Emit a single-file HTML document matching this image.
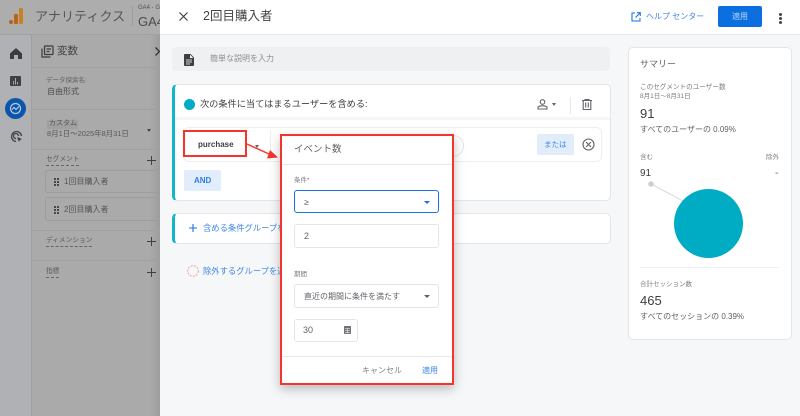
<!DOCTYPE html>
<html lang="ja"><head><meta charset="utf-8">
<style>
html,body{margin:0;padding:0}
body{width:800px;height:416px;overflow:hidden;position:relative;background:#f6f7f9;font-family:"Liberation Sans","Noto Sans CJK JP",sans-serif;color:#3c4043}
.a,.t{position:absolute}
.t{white-space:nowrap;line-height:1}
svg{position:absolute;display:block}
.box{position:absolute;box-sizing:border-box;background:#fff;border:1px solid #e3e5e8;border-radius:4px}
</style></head><body>

<!-- dimmed left -->
<div class="a" style="left:0;top:0;width:160px;height:416px;background:#aaaaaa"></div>
<div class="a" style="left:0;top:0;width:160px;height:34px;background:#adadad"></div>
<div class="a" style="left:0;top:34px;width:32px;height:382px;background:#afb1b4;border-right:1px solid #a0a0a0;box-sizing:border-box"></div>
<div class="a" style="left:0;top:34px;width:160px;height:1px;background:#a2a2a2"></div>
<div class="a" style="left:150px;top:35px;width:10px;height:381px;background:linear-gradient(90deg,#aaa,#9d9d9d)"></div>
<div class="a" style="left:9px;top:20px;width:4px;height:4px;background:#b5611a;border-radius:50%"></div>
<div class="a" style="left:14px;top:14px;width:4px;height:10px;background:#b8641a;border-radius:1px"></div>
<div class="a" style="left:19px;top:8px;width:4px;height:16px;background:#c98020;border-radius:1px"></div>
<div class="t" style="left:35px;top:10px;font-size:13px;color:#565656;letter-spacing:.1px">アナリティクス</div>
<div class="a" style="left:132px;top:6px;width:1px;height:20px;background:#9c9c9c"></div>
<div class="t" style="left:138px;top:5px;font-size:6px;color:#555">GA4 - G</div>
<div class="t" style="left:138px;top:15px;font-size:13px;color:#4c4c4c">GA4</div>

<!-- rail icons -->
<svg style="left:10px;top:48px" width="12" height="11" viewBox="0 0 12 11"><path d="M0 5.500L6 0l6 5.500V11H8V7H4v4H0z" fill="#3a3c3e"/></svg>
<svg style="left:10px;top:76px" width="11" height="10" viewBox="0 0 11 10"><rect width="11" height="10" rx="1" fill="#3e4042"/><path d="M3 5h1v3.500H3zM5 2h1v6.500H5zM7 6h1v2.500H7z" fill="#aaa"/></svg>
<div class="a" style="left:5px;top:98px;width:21px;height:21px;border-radius:50%;background:#0b55ad"></div>
<svg style="left:9px;top:102px" width="13" height="13" viewBox="0 0 13 13" fill="none" stroke="#b9c9dc" stroke-width="1.200"><circle cx="6.500" cy="6.500" r="5"/><path d="M3 7.500l2-2 2 2 3-3"/></svg>
<svg style="left:10px;top:130px" width="13" height="13" viewBox="0 0 13 13" fill="none" stroke="#3c3e40" stroke-width="1.300"><path d="M6 11.500A5 5 0 1 1 11.500 6"/><path d="M6 8.500A2.500 2.500 0 1 1 8.500 6"/><path d="M7 7l5 2-2 1-1 2z" fill="#3c3e40" stroke="none"/></svg>

<!-- left panel -->
<svg style="left:41px;top:45px" width="13" height="13" viewBox="0 0 13 13" fill="none" stroke="#3a3c3e" stroke-width="1.200"><rect x="3.500" y="1" width="8.500" height="8.500" rx=".5"/><path d="M1 3.500V12h8.500"/><path d="M5.500 4h4.500M5.500 6.500h3"/></svg>
<div class="t" style="left:57px;top:46px;font-size:10.500px;color:#444">変数</div>
<svg style="left:155px;top:47px" width="5" height="9" viewBox="0 0 5 9" fill="none" stroke="#333" stroke-width="1.300"><path d="M.5.500l4 4-4 4"/></svg>
<div class="a" style="left:32px;top:67px;width:128px;height:1px;background:#a0a0a0"></div>
<div class="t" style="left:46px;top:78px;font-size:6.500px;color:#636363">データ探索名:</div>
<div class="t" style="left:47px;top:88px;font-size:8px;color:#4a4a4a">自由形式</div>
<div class="a" style="left:32px;top:109px;width:128px;height:1px;background:#a0a0a0"></div>
<div class="a" style="left:47px;top:120px;width:31px;height:9px;background:#a0a0a0;border-radius:1px"></div>
<div class="t" style="left:49px;top:120px;font-size:7px;color:#555">カスタム</div>
<div class="t" style="left:47px;top:130px;font-size:7.500px;color:#595959;letter-spacing:-.05px">8月1日～2025年8月31日</div>
<div class="a" style="left:147px;top:129px;border:2.500px solid transparent;border-top:3px solid #444;border-bottom:0"></div>
<div class="a" style="left:32px;top:149px;width:128px;height:1px;background:#a0a0a0"></div>
<div class="t" style="left:46px;top:157px;font-size:6.700px;color:#5c5c5c;border-bottom:1px dashed #666;padding-bottom:1px">セグメント</div>
<svg style="left:147px;top:156px" width="9" height="9" viewBox="0 0 9 9" stroke="#3f3f3f"><path d="M4.500 0v9M0 4.500h9"/></svg>
<div class="a" style="left:45px;top:170px;width:115px;height:23px;border:1px solid #9d9d9d;border-right:0;border-radius:3px 0 0 3px;box-sizing:border-box"></div>
<svg style="left:54px;top:178px" width="5" height="8" viewBox="0 0 5 8" fill="#484848"><path d="M0 0h2v2H0zM3 0h2v2H3zM0 3h2v2H0zM3 3h2v2H3zM0 6h2v2H0zM3 6h2v2H3z"/></svg>
<div class="t" style="left:64px;top:178px;font-size:8px;color:#555">1回目購入者</div>
<div class="a" style="left:45px;top:197px;width:115px;height:24px;border:1px solid #9d9d9d;border-right:0;border-radius:3px 0 0 3px;box-sizing:border-box"></div>
<svg style="left:54px;top:206px" width="5" height="8" viewBox="0 0 5 8" fill="#484848"><path d="M0 0h2v2H0zM3 0h2v2H3zM0 3h2v2H0zM3 3h2v2H3zM0 6h2v2H0zM3 6h2v2H3z"/></svg>
<div class="t" style="left:64px;top:206px;font-size:8px;color:#555">2回目購入者</div>
<div class="a" style="left:32px;top:230px;width:128px;height:1px;background:#a0a0a0"></div>
<div class="t" style="left:46px;top:238px;font-size:6.700px;color:#5c5c5c;border-bottom:1px dashed #666;padding-bottom:1px">ディメンション</div>
<svg style="left:147px;top:237px" width="9" height="9" viewBox="0 0 9 9" stroke="#3f3f3f"><path d="M4.500 0v9M0 4.500h9"/></svg>
<div class="a" style="left:32px;top:260px;width:128px;height:1px;background:#a0a0a0"></div>
<div class="t" style="left:46px;top:269px;font-size:6.700px;color:#5c5c5c;border-bottom:1px dashed #666;padding-bottom:1px">指標</div>
<svg style="left:147px;top:268px" width="9" height="9" viewBox="0 0 9 9" stroke="#3f3f3f"><path d="M4.500 0v9M0 4.500h9"/></svg>

<!-- main -->
<div class="a" style="left:160px;top:0;width:640px;height:34px;background:#fff;border-bottom:1px solid #e6e8ea"></div>
<svg style="left:179px;top:12px" width="9" height="9" viewBox="0 0 9 9" stroke="#3c4043" stroke-width="1.200"><path d="M.5.500l8 8M8.500.500l-8 8"/></svg>
<div class="t" style="left:203px;top:10px;font-size:12.500px;color:#444">2回目購入者</div>
<svg style="left:631px;top:12px" width="10" height="10" viewBox="0 0 10 10" fill="none" stroke="#1a73e8" stroke-width="1.100"><path d="M4 1H1v8h8V6"/><path d="M6 .7h3.300V4M9 1L4.500 5.500"/></svg>
<div class="t" style="left:646px;top:13px;font-size:8px;color:#3f87e6">ヘルプ センター</div>
<div class="a" style="left:718px;top:6px;width:44px;height:21px;background:#0b6fe0;border-radius:2px"></div>
<div class="t" style="left:732px;top:13px;font-size:8px;color:#bcd6f7">適用</div>
<div class="a" style="left:779px;top:13px;width:3px;height:3px;background:#444;border-radius:50%;box-shadow:0 4px 0 #444,0 8px 0 #444"></div>

<div class="a" style="left:172px;top:47px;width:438px;height:24px;background:#eff0f2;border-radius:4px"></div>
<svg style="left:184px;top:54px" width="10" height="12" viewBox="0 0 10 12"><path d="M1 0h5.500L10 3.500V11a1 1 0 0 1-1 1H1a1 1 0 0 1-1-1V1a1 1 0 0 1 1-1z" fill="#3c4043"/><path d="M2 6h6M2 8h6M2 10h4" stroke="#fff" stroke-width=".8"/><path d="M6 .8V4h3.200" fill="#fff"/></svg>
<div class="t" style="left:210px;top:55px;font-size:8px;color:#8a8d90">簡単な説明を入力</div>

<!-- include card -->
<div class="box" style="left:172px;top:84px;width:439px;height:117px;border-left:3px solid #12b5cb;border-radius:5px"></div>
<div class="a" style="left:175px;top:117px;width:435px;height:3px;background:#f5f6f7"></div>
<div class="a" style="left:184px;top:99px;width:11px;height:11px;border-radius:50%;background:#00acc8"></div>
<div class="t" style="left:200px;top:100px;font-size:9.200px;color:#3e4144">次の条件に当てはまるユーザーを含める:</div>
<svg style="left:537px;top:99px" width="11" height="11" viewBox="0 0 11 11" fill="none" stroke="#5f6368" stroke-width="1.100"><circle cx="5.500" cy="3" r="2.300"/><path d="M1 10V8.500C1 7.500 3 6.800 5.500 6.800S10 7.500 10 8.500V10z"/></svg>
<div class="a" style="left:552px;top:103px;border:2.500px solid transparent;border-top:3px solid #5f6368;border-bottom:0"></div>
<div class="a" style="left:570px;top:97px;width:1px;height:17px;background:#e6e8ea"></div>
<svg style="left:582px;top:99px" width="10" height="11" viewBox="0 0 10 11" fill="none" stroke="#5f6368" stroke-width="1.100"><path d="M0 1.500h10M3 1.500V.5h4v1M1.200 1.500V10.500h7.600V1.500M3.700 3.500v5M6.300 3.500v5"/></svg>

<!-- filter row -->
<div class="box" style="left:183px;top:127px;width:419px;height:35px;border-radius:6px;border-color:#eceef0"></div>
<div class="a" style="left:270px;top:130px;width:1px;height:30px;background:#eceef0"></div>
<div class="a" style="left:255px;top:145px;border:2.500px solid transparent;border-top:3px solid #5f6368;border-bottom:0"></div>
<div class="a" style="left:440px;top:135px;width:24px;height:22px;border:1px solid #e3e5e8;border-left:0;border-radius:0 11px 11px 0;box-sizing:border-box"></div>
<div class="a" style="left:537px;top:134px;width:37px;height:21px;background:#e1edfb;border-radius:2px"></div>
<div class="t" style="left:544px;top:141px;font-size:7.500px;color:#3f87e6">または</div>
<svg style="left:582px;top:138px" width="13" height="13" viewBox="0 0 13 13" fill="none" stroke="#5f6368" stroke-width="1.100"><circle cx="6.500" cy="6.500" r="5.500"/><path d="M4 4l5 5M9 4l-5 5"/></svg>
<div class="a" style="left:184px;top:170px;width:37px;height:21px;background:#e1edfb;border-radius:2px"></div>
<div class="t" style="left:194px;top:177px;font-size:8px;color:#2f7de1;font-weight:700">AND</div>

<div class="a" style="left:183px;top:130px;width:64px;height:27px;box-sizing:border-box;border:2px solid #f5352b;background:#fff"></div>
<div class="t" style="left:198px;top:141px;font-size:8px;color:#3c4043;font-weight:700">purchase</div>
<svg style="left:245px;top:142px" width="36" height="20" viewBox="0 0 36 20"><path d="M2 2L24 12" stroke="#f5352b" stroke-width="1.500"/><path d="M33 15.500L22 16.500 25 8z" fill="#f5352b"/></svg>

<!-- add include card -->
<div class="box" style="left:172px;top:213px;width:439px;height:31px;border-left:3px solid #12b5cb;border-radius:5px"></div>
<svg style="left:189px;top:224px" width="8" height="8" viewBox="0 0 8 8" stroke="#1a73e8" stroke-width="1.100"><path d="M4 0v8M0 4h8"/></svg>
<div class="t" style="left:203px;top:224px;font-size:8.300px;color:#3f87e6">含める条件グループを追加</div>

<svg style="left:187px;top:265px" width="12" height="12" viewBox="0 0 12 12" fill="none" stroke="#eea49d" stroke-width="1" stroke-dasharray="2 1.200"><circle cx="6" cy="6" r="5.300"/></svg>
<div class="t" style="left:203px;top:267px;font-size:8.300px;color:#3f87e6">除外するグループを追加</div>

<!-- summary -->
<div class="box" style="left:628px;top:47px;width:164px;height:293px;border-radius:5px"></div>
<div class="t" style="left:640px;top:60px;font-size:9px;color:#5f6368">サマリー</div>
<div class="t" style="left:640px;top:85px;font-size:6.600px;color:#7b7e82">このセグメントのユーザー数</div>
<div class="t" style="left:640px;top:94px;font-size:6.500px;color:#7b7e82">8月1日～8月31日</div>
<div class="t" style="left:640px;top:107px;font-size:13px;color:#3c4043">91</div>
<div class="t" style="left:640px;top:126px;font-size:8px;color:#5f6368">すべてのユーザーの 0.09%</div>
<div class="t" style="left:640px;top:155px;font-size:6.500px;color:#7b7e82">含む</div>
<div class="t" style="left:766px;top:155px;font-size:6.500px;color:#7b7e82">除外</div>
<div class="t" style="left:640px;top:169px;font-size:10px;color:#3c4043">91</div>
<div class="t" style="left:775px;top:169px;font-size:10px;color:#5f6368">-</div>
<svg style="left:640px;top:176px" width="110" height="90" viewBox="0 0 110 90"><path d="M11 8L45 26" stroke="#dcdcdc"/><circle cx="11" cy="8" r="2.800" fill="#cfcfcf"/></svg>
<div class="a" style="left:674px;top:189px;width:69px;height:69px;border-radius:50%;background:#00acc4"></div>
<div class="a" style="left:640px;top:267px;width:139px;height:1px;background:#eff0f2"></div>
<div class="t" style="left:640px;top:282px;font-size:6.500px;color:#7b7e82">合計セッション数</div>
<div class="t" style="left:640px;top:294px;font-size:13px;color:#3c4043">465</div>
<div class="t" style="left:640px;top:313px;font-size:8px;color:#5f6368">すべてのセッションの 0.39%</div>

<!-- popup -->
<div class="a" style="left:280px;top:134px;width:174px;height:251px;box-sizing:border-box;background:#fff;border:2px solid #f5352b;box-shadow:0 4px 10px rgba(0,0,0,.25)"></div>
<div class="t" style="left:294px;top:145px;font-size:9.500px;color:#5f6368">イベント数</div>
<div class="a" style="left:282px;top:164px;width:170px;height:1px;background:#e6e8ea"></div>
<div class="t" style="left:294px;top:178px;font-size:6.500px;color:#7b7e82">条件*</div>
<div class="a" style="left:294px;top:190px;width:145px;height:23px;box-sizing:border-box;border:1.500px solid #1a73e8;border-radius:3px"></div>
<div class="t" style="left:304px;top:198px;font-size:8.500px;color:#5f6368">≥</div>
<div class="a" style="left:424px;top:201px;border:3px solid transparent;border-top:3.500px solid #1a73e8;border-bottom:0"></div>
<div class="box" style="left:294px;top:224px;width:145px;height:24px;border-radius:3px"></div>
<div class="t" style="left:304px;top:232px;font-size:9px;color:#5f6368">2</div>
<div class="t" style="left:294px;top:272px;font-size:6.500px;color:#7b7e82">期間</div>
<div class="box" style="left:294px;top:284px;width:145px;height:24px;border-radius:3px"></div>
<div class="t" style="left:304px;top:293px;font-size:8px;color:#5f6368">直近の期間に条件を満たす</div>
<div class="a" style="left:424px;top:295px;border:3px solid transparent;border-top:3.500px solid #5f6368;border-bottom:0"></div>
<div class="box" style="left:294px;top:319px;width:64px;height:23px;border-radius:3px"></div>
<div class="t" style="left:303px;top:326px;font-size:9px;color:#5f6368">30</div>
<svg style="left:344px;top:326px" width="7" height="8" viewBox="0 0 7 8"><rect width="7" height="8" rx=".5" fill="#6f7276"/><path d="M1 2.500h5M1 4.500h5M1 6.300h5M3.500 2.500V7.500" stroke="#fff" stroke-width=".5"/></svg>
<div class="a" style="left:282px;top:356px;width:170px;height:1px;background:#e6e8ea"></div>
<div class="t" style="left:362px;top:367px;font-size:8px;color:#7b7e82">キャンセル</div>
<div class="t" style="left:422px;top:367px;font-size:8px;color:#3f87e6">適用</div>

</body></html>
